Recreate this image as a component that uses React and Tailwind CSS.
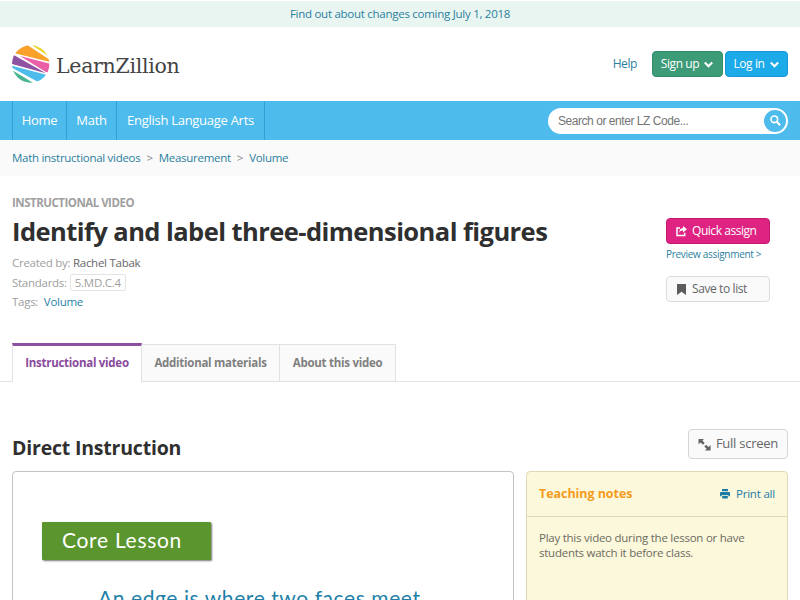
import React from "react";

const navLinks = [
  { label: "Home", width: "w-[54px]" },
  { label: "Math", width: "w-[50px]" },
  { label: "English Language Arts", width: "w-[148px]" },
];

const crumbs = ["Math instructional videos", "Measurement", "Volume"];

const tabs = [
  { label: "Additional materials", width: "w-[138px]" },
  { label: "About this video", width: "w-[116px]" },
];

const LogoMark = () => (
  <svg className="h-[38px] w-[38px]" viewBox="0 0 114 114">
    <defs>
      <clipPath id="ball">
        <circle cx="56" cy="57" r="56" />
      </clipPath>
    </defs>
    <g clipPath="url(#ball)">
      <path d="M0 0H114V114H0Z" fill="#fff" />
      <path d="M53 -4L116 -4V38Z" fill="#e8d629" />
      <path d="M0 26L40 -4L114 45V51L8 25Z" fill="#f9a12b" />
      <path d="M24 33L114 56V86L98 79Z" fill="#ea5fa5" />
      <path d="M0 27L102 85L0 57Z" fill="#8f51a1" />
      <path d="M0 62L114 92V114H84L0 68Z" fill="#4dbcec" />
      <path d="M0 75L64 114H0Z" fill="#4bb591" />
    </g>
  </svg>
);

const Chevron = () => (
  <svg className="h-[9px] w-[9px]" viewBox="0 0 9 9" fill="none">
    <path d="M.8 2.6L4.5 6.3L8.2 2.6" stroke="currentColor" strokeWidth="2.1" />
  </svg>
);

const ShareIcon = () => (
  <svg className="h-[11px] w-[11px]" viewBox="0 0 11 11" fill="none">
    <path d="M4 2H1V9.6H8.7V6.8" stroke="currentColor" strokeWidth="1.5" />
    <path d="M7 0L11 3.3L7 6.5V4.6C5 4.5 4 5.3 3.4 6.9C3.1 4 4.3 2.2 7 2Z" fill="currentColor" />
  </svg>
);

const ExpandIcon = () => (
  <svg className="h-[13px] w-[13px]" viewBox="0 0 13 13" fill="currentColor">
    <path d="M.5 1H6L4.4 2.6L6.7 5L5 6.7L2.5 4.4L.5 6.3Z" />
    <path d="M12.6 12.5H7L8.6 10.8L6.3 8.5L8 6.8L10.5 9.1L12.6 7Z" />
  </svg>
);

const PrintIcon = () => (
  <svg className="h-[10px] w-[10px]" viewBox="0 0 10 10">
    <path d="M2 0H8V2.2H2Z" fill="#1c7ba5" />
    <path d="M1 3H9Q10 3 10 4V7.2H8.4V6H1.6V7.2H0V4Q0 3 1 3Z" fill="#1c7ba5" />
    <path d="M2.2 6.8H7.8V9.5H2.2Z" fill="#1c7ba5" />
  </svg>
);

const Header = () => (
  <div className="flex h-[74px] items-center justify-between px-3">
    <div className="flex items-center">
      <LogoMark />
      <span className="ml-[6px] mt-[3px] whitespace-nowrap font-['DejaVu_Serif'] text-[20.5px] leading-6 tracking-[-0.3px] text-[#444]">
        LearnZillion
      </span>
    </div>
    <div className="flex items-center text-[12px] tracking-[-0.4px] text-white">
      <span className="mr-[15px] text-[#2b7f9e]">Help</span>
      <div className="mr-[2px] flex h-[26px] w-[71px] items-center justify-center gap-[5px] rounded-[4px] border border-[#348a69] bg-[#3d9b78] pr-px">
        Sign up <Chevron />
      </div>
      <div className="flex h-[26px] w-[63px] items-center justify-center gap-[5px] rounded-[4px] border border-[#1797d0] bg-[#1caae8] pr-px">
        Log in <Chevron />
      </div>
    </div>
  </div>
);

const Navbar = () => (
  <div className="flex h-[39px] items-center justify-between bg-[#4dbbec] px-3">
    <div className="flex h-full border-l border-[#2fa0d6]">
      {navLinks.map((link) => (
        <div
          key={link.label}
          className={`flex items-center justify-center whitespace-nowrap border-r border-[#2fa0d6] text-[13px] tracking-[-0.28px] text-white ${link.width}`}
        >
          {link.label}
        </div>
      ))}
    </div>
    <div className="flex h-[26px] w-[240px] items-center justify-between rounded-full bg-white pl-[10px] pr-[2px]">
      <span className="font-['Liberation_Sans'] text-[12px] tracking-[-0.45px] text-[#757575]">
        Search or enter LZ Code...
      </span>
      <div className="flex h-[22px] w-[22px] items-center justify-center rounded-full bg-[#4dbbec]">
        <svg className="h-[11px] w-[11px]" viewBox="0 0 11 11" fill="none" stroke="#fff">
          <circle cx="4.3" cy="4.3" r="3.3" strokeWidth="1.6" />
          <path d="M6.8 6.8L10.2 10.2" strokeWidth="2" />
        </svg>
      </div>
    </div>
  </div>
);

const LessonInfo = () => (
  <div className="flex h-[167px] justify-between pl-3 pr-[30px]">
    <div className="text-[11.5px] tracking-[-0.27px] text-[#a0a0a0]">
      <p className="mt-[19px] font-bold leading-[15px] tracking-[-0.5px]">INSTRUCTIONAL VIDEO</p>
      <h1 className="mt-[3px] whitespace-nowrap text-[25.5px] font-bold leading-9 tracking-[-0.55px] text-[#2f2f2f]">
        Identify and label three-dimensional figures
      </h1>
      <p className="mt-[4px] leading-[19px]">
        Created by: <span className="text-[#666]">Rachel Tabak</span>
      </p>
      <div className="mt-px flex h-[19px] items-center">
        Standards:
        <span className="ml-[3px] flex h-[17px] items-center rounded-[2px] border border-[#e4e4e4] px-[4px]">
          5.MD.C.4
        </span>
      </div>
      <p className="leading-[19px]">
        Tags: <span className="ml-[3px] text-[#1f83a8]">Volume</span>
      </p>
    </div>
    <div className="mt-[42px] w-[104px]">
      <div className="flex h-[26px] items-center rounded-[4px] border border-[#c41a70] bg-[#de2383] pl-[9px] text-[12px] tracking-[-0.45px] text-white">
        <ShareIcon />
        <span className="ml-[5px]">Quick assign</span>
      </div>
      <p className="mt-[3px] whitespace-nowrap text-[10px] leading-[15px] tracking-[-0.3px] text-[#2b7f9e]">
        Preview assignment &gt;
      </p>
      <div className="mt-[14px] flex h-[26px] items-center rounded-[4px] border border-[#dcdcdc] bg-[#fafafa] pl-[10px] text-[12px] tracking-[-0.4px] text-[#666]">
        <svg className="h-[11px] w-[9px]" viewBox="0 0 9 11">
          <path d="M0 0H9V11L4.5 7.7L0 11Z" fill="#5c5c5c" />
        </svg>
        <span className="ml-[6px]">Save to list</span>
      </div>
    </div>
  </div>
);

const Tabs = () => (
  <div className="flex h-[39px] items-end border-b border-[#e2e2e2] pl-3 text-[11.5px] font-bold tracking-[-0.27px] text-[#808080]">
    <div className="-mb-px flex h-[39px] w-[130px] items-center justify-center border-x border-t-[3px] border-x-[#e2e2e2] border-t-[#8e4fa0] bg-white pb-[2px] text-[#8a4a9c]">
      Instructional video
    </div>
    {tabs.map((tab) => (
      <div
        key={tab.label}
        className={`flex h-[37px] items-center justify-center border-r border-t border-[#e2e2e2] bg-[#fafafa] ${tab.width}`}
      >
        {tab.label}
      </div>
    ))}
  </div>
);

const VideoPanel = () => (
  <div className="h-[300px] w-[502px] rounded-[4px] border border-[#c4c4c4] bg-white pl-[29px] pt-[50px] font-['Lato']">
    <div className="flex h-[38px] w-[169px] items-center rounded-[1px] bg-[#5a952e] pb-[2px] pl-[20px] text-[21px] tracking-[0.7px] text-white shadow-[1px_1px_2px_#777]">
      Core Lesson
    </div>
    <p className="ml-[56px] mt-[23px] whitespace-nowrap text-[21px] leading-[30px] tracking-[0.58px] text-[#217fa8]">
      An edge is where two faces meet
    </p>
  </div>
);

const TeachingNotes = () => (
  <div className="h-[300px] w-[262px] rounded-[4px] border border-[#dfd9b5] bg-[#fcf8dc]">
    <div className="flex h-[45px] items-center justify-between border-b border-[#dfd9b5] px-3">
      <span className="text-[12.5px] font-bold tracking-[-0.05px] text-[#f49c20]">Teaching notes</span>
      <span className="flex items-center text-[11.5px] tracking-[-0.2px] text-[#1c7ba5]">
        <PrintIcon />
        <span className="ml-[6px]">Print all</span>
      </span>
    </div>
    <p className="px-3 pt-[13px] text-[11.5px] leading-[15px] tracking-[-0.25px] text-[#6c6b60]">
      Play this video during the lesson or have
      <br />
      students watch it before class.
    </p>
  </div>
);

const App = () => {
  return (
    <div className="h-[600px] w-[800px] overflow-hidden bg-white pt-px font-['Open_Sans',sans-serif]">
      <div className="flex h-[26px] items-center justify-center bg-[#e9f5f1] text-[11.5px] tracking-[-0.27px] text-[#2b7f9e]">
        Find out about changes coming July 1, 2018
      </div>
      <Header />
      <Navbar />
      <div className="flex h-[36px] items-center bg-[#fafafa] px-3 text-[11.5px] tracking-[-0.28px] text-[#2b7f9e]">
        {crumbs.map((crumb, index) => (
          <React.Fragment key={crumb}>
            {index > 0 && <span className="mx-[6px] text-[#888]">&gt;</span>}
            <span>{crumb}</span>
          </React.Fragment>
        ))}
      </div>
      <LessonInfo />
      <Tabs />
      <div className="flex h-[89px] items-end justify-between px-3 pb-3">
        <h2 className="text-[19.5px] font-bold leading-[23px] tracking-[-0.2px] text-[#2f2f2f]">Direct Instruction</h2>
        <div className="flex h-[30px] w-[100px] items-center justify-center gap-[5px] rounded-[4px] border border-[#d6d6d6] bg-[#fafafa] text-[13px] tracking-[-0.25px] text-[#666]">
          <ExpandIcon />
          Full screen
        </div>
      </div>
      <div className="flex justify-between px-3">
        <VideoPanel />
        <TeachingNotes />
      </div>
    </div>
  );
};

export default App;
